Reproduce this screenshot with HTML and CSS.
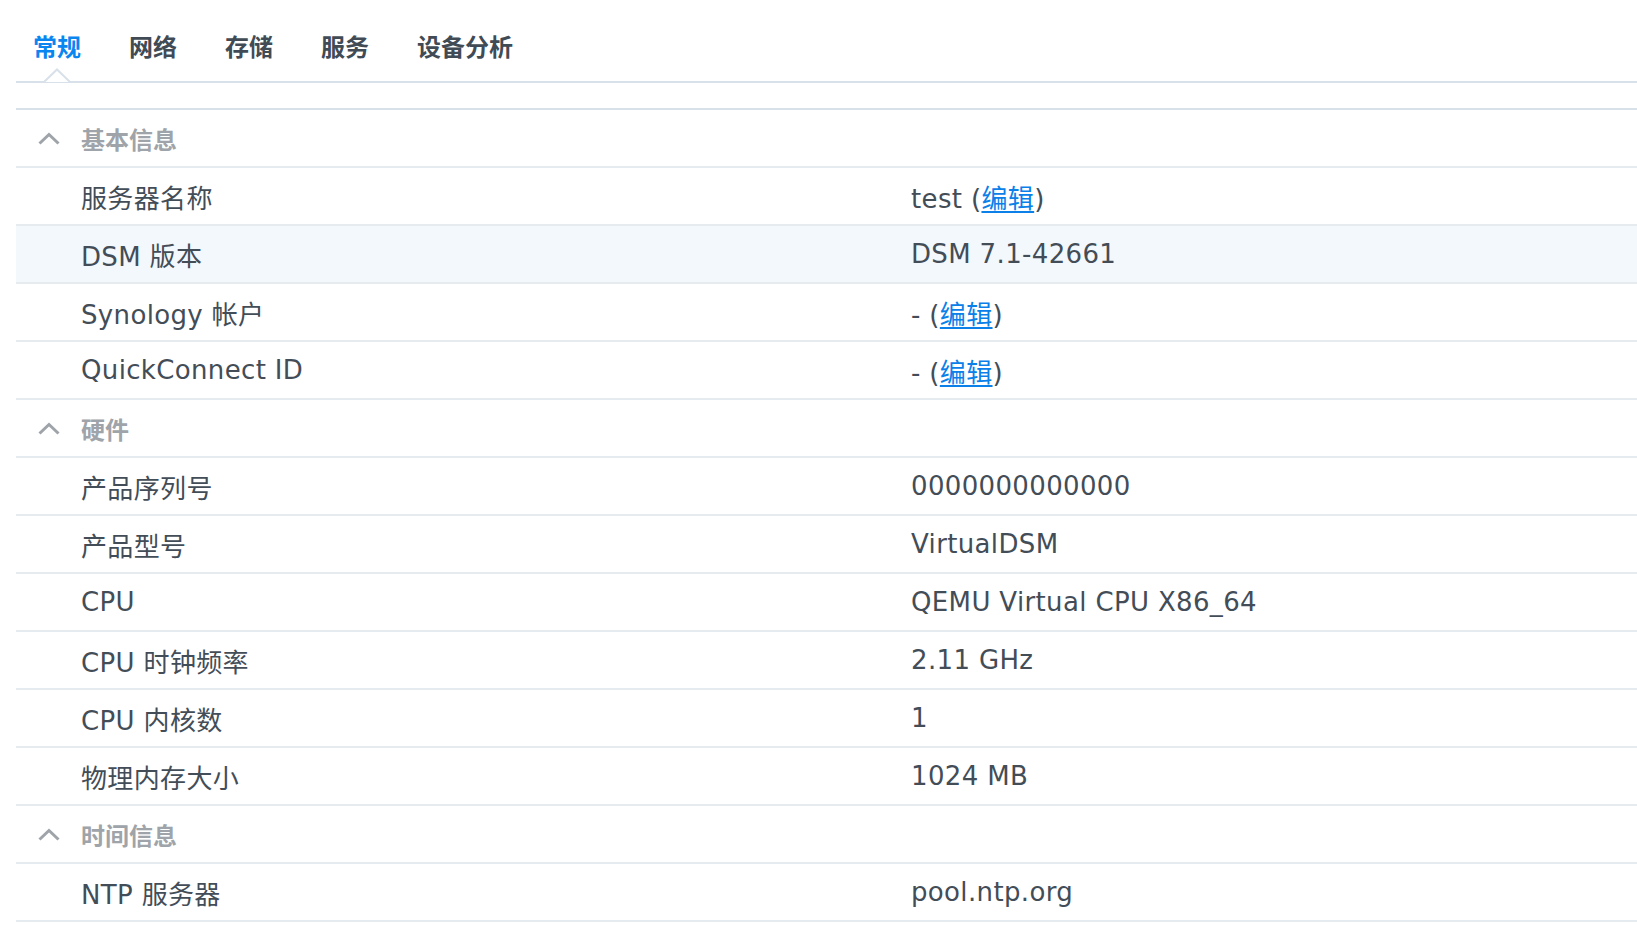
FILE: index.html
```html
<!DOCTYPE html>
<html lang="zh-CN">
<head>
<meta charset="utf-8">
<title>信息中心</title>
<link rel="stylesheet" href="styles.css">
</head>
<body>
<div class="page">
  <div class="tabs">
    <div class="tab active">常规
      <svg class="notch" width="28" height="15" viewBox="0 0 28 15"><polyline points="1,14 14,1.5 27,14" fill="#fff" stroke="#d8e1e9" stroke-width="2"/></svg>
    </div>
    <div class="tab">网络</div>
    <div class="tab">存储</div>
    <div class="tab">服务</div>
    <div class="tab">设备分析</div>
  </div>

  <div class="table">
    <div class="row head">
      <svg class="chev" width="22" height="13" viewBox="0 0 22 13"><polyline points="1.5,11.5 11,2.5 20.5,11.5" fill="none" stroke="#9ea4a9" stroke-width="3"/></svg>
      <span>基本信息</span>
    </div>
    <div class="row"><div class="label">服务器名称</div><div class="value">test (<a href="#">编辑</a>)</div></div>
    <div class="row hl"><div class="label">DSM 版本</div><div class="value">DSM 7.1-42661</div></div>
    <div class="row"><div class="label">Synology 帐户</div><div class="value">- (<a href="#">编辑</a>)</div></div>
    <div class="row"><div class="label">QuickConnect ID</div><div class="value">- (<a href="#">编辑</a>)</div></div>

    <div class="row head">
      <svg class="chev" width="22" height="13" viewBox="0 0 22 13"><polyline points="1.5,11.5 11,2.5 20.5,11.5" fill="none" stroke="#9ea4a9" stroke-width="3"/></svg>
      <span>硬件</span>
    </div>
    <div class="row"><div class="label">产品序列号</div><div class="value">0000000000000</div></div>
    <div class="row"><div class="label">产品型号</div><div class="value">VirtualDSM</div></div>
    <div class="row"><div class="label">CPU</div><div class="value">QEMU Virtual CPU X86_64</div></div>
    <div class="row"><div class="label">CPU 时钟频率</div><div class="value">2.11 GHz</div></div>
    <div class="row"><div class="label">CPU 内核数</div><div class="value">1</div></div>
    <div class="row"><div class="label">物理内存大小</div><div class="value">1024 MB</div></div>

    <div class="row head">
      <svg class="chev" width="22" height="13" viewBox="0 0 22 13"><polyline points="1.5,11.5 11,2.5 20.5,11.5" fill="none" stroke="#9ea4a9" stroke-width="3"/></svg>
      <span>时间信息</span>
    </div>
    <div class="row"><div class="label">NTP 服务器</div><div class="value">pool.ntp.org</div></div>
  </div>
</div>
</body>
</html>
```

FILE: styles.css
```css
html, body {
  margin: 0;
  padding: 0;
  background: #ffffff;
}

body {
  font-family: "DejaVu Sans", "Noto Sans CJK SC", sans-serif;
  color: #434d57;
  overflow: hidden;
}

.page {
  padding-left: 16px;
}

.tabs {
  display: flex;
  align-items: flex-start;
  gap: 48px;
  height: 81px;
  padding-left: 17px;
  border-bottom: 2px solid #d8e1e9;
}

.tab {
  position: relative;
  margin-top: 30px;
  font-family: "Noto Sans CJK SC", sans-serif;
  font-size: 24px;
  font-weight: 700;
  line-height: 32px;
  color: #414b55;
}

.tab.active {
  color: #0a86f0;
}

.notch {
  position: absolute;
  left: 50%;
  margin-left: -14px;
  top: 38px;
}

.table {
  margin-top: 25px;
  border-top: 2px solid #d8e1e9;
}

.row {
  display: grid;
  grid-template-columns: 895px 1fr;
  align-items: center;
  height: 56px;
  border-bottom: 2px solid #e6ebf0;
  font-size: 26px;
  letter-spacing: 0.35px;
}

.row.hl {
  background: #f3f8fd;
}

.label {
  padding-left: 65px;
  white-space: nowrap;
}

.value {
  white-space: nowrap;
}

.value a {
  color: #0a80e8;
  text-decoration: underline;
  text-decoration-thickness: 2px;
  text-underline-offset: 3px;
}

.row.head {
  display: flex;
  align-items: center;
  gap: 21px;
  padding-left: 22px;
  color: #9ea4a9;
  font-family: "Noto Sans CJK SC", sans-serif;
  font-size: 24px;
  font-weight: 700;
  letter-spacing: 0;
}

.chev {
  display: block;
}
```
